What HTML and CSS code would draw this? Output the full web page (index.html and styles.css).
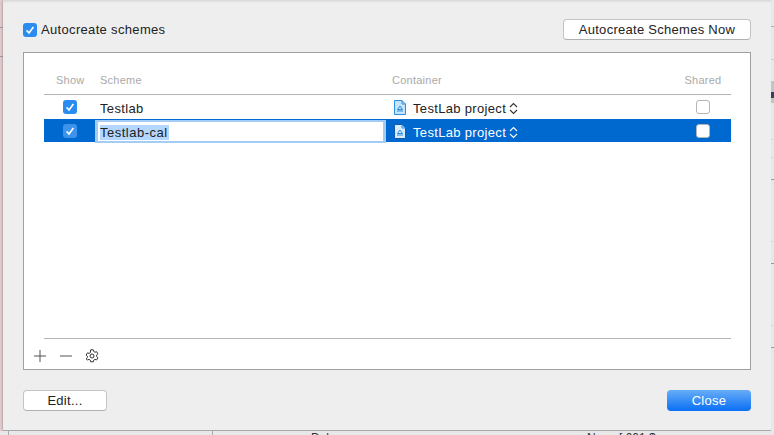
FILE: index.html
```html
<!DOCTYPE html>
<html lang="en">
<head>
    <meta charset="UTF-8">
    <title>Manage Schemes</title>
    <link rel="stylesheet" href="styles.css">
</head>
<body>
    <div class="desktop">
        <div class="side side-left"></div>
        <div class="sheet">
            <div class="top-row">
                <label class="auto-label">
                    <span class="check on"><svg viewBox="0 0 14 14"><path d="M3.6 7.4l2.4 2.6 4.4-6"/></svg></span>
                    Autocreate schemes
                </label>
                <button class="btn btn-wide">Autocreate Schemes Now</button>
            </div>
            <div class="panel">
                <div class="table">
                    <div class="row head">
                        <div class="col-show">Show</div>
                        <div class="col-scheme">Scheme</div>
                        <div class="col-container">Container</div>
                        <div class="col-shared">Shared</div>
                    </div>
                    <div class="row">
                        <div class="col-show"><span class="check on"><svg viewBox="0 0 14 14"><path d="M3.6 7.4l2.4 2.6 4.4-6"/></svg></span></div>
                        <div class="col-scheme">Testlab</div>
                        <div class="col-container">
                            <svg class="file-icon" viewBox="0 0 12 15"><path class="page" d="M.5.5h7.5l3.5 3.5v10.500h-11z"/><path class="fold" d="M8 .5v3.500h3.500"/><path class="mark" d="M3 11h6M3.500 9.500l2.500-3.500 2.500 3.500z"/></svg>
                            TestLab project
                            <svg class="updown" viewBox="0 0 9 13"><path d="M1 5l3.500-3.500 3.500 3.500M1 8l3.500 3.500 3.500-3.500"/></svg>
                        </div>
                        <div class="col-shared"><span class="check"></span></div>
                    </div>
                    <div class="row selected">
                        <div class="col-show"><span class="check on"><svg viewBox="0 0 14 14"><path d="M3.6 7.4l2.4 2.6 4.4-6"/></svg></span></div>
                        <div class="col-scheme"><div class="edit"><span class="edit-sel">Testlab-cal</span></div></div>
                        <div class="col-container">
                            <svg class="file-icon" viewBox="0 0 12 15"><path class="page" d="M.5.5h7.5l3.5 3.5v10.500h-11z"/><path class="fold" d="M8 .5v3.500h3.500"/><path class="mark" d="M3 11h6M3.500 9.500l2.500-3.500 2.500 3.500z"/></svg>
                            TestLab project
                            <svg class="updown" viewBox="0 0 9 13"><path d="M1 5l3.500-3.500 3.500 3.500M1 8l3.500 3.500 3.500-3.500"/></svg>
                        </div>
                        <div class="col-shared"><span class="check"></span></div>
                    </div>
                </div>
                <div class="tools">
                    <svg viewBox="0 0 12 12" class="tool"><path d="M6 0v12M0 6h12"/></svg>
                    <svg viewBox="0 0 12 12" class="tool"><path d="M0 6h12"/></svg>
                    <svg viewBox="0 0 14 14" class="tool gear"><path d="M5.700.8h2.600l.4 1.700 1.200.7 1.700-.5 1.300 2.200-1.300 1.200v1.400l1.300 1.200-1.300 2.200-1.700-.5-1.200.7-.4 1.700H5.700l-.4-1.700-1.200-.7-1.700.5L1.100 9.900l1.300-1.200V7.300L1.100 6.100l1.300-2.200 1.700.5 1.200-.7z"/><circle cx="7" cy="7" r="2"/></svg>
                </div>
            </div>
            <div class="bottom-row">
                <button class="btn btn-edit">Edit...</button>
                <button class="btn btn-close">Close</button>
            </div>
        </div>
        <div class="side side-right"><span class="peek"></span></div>
    </div>
    <div class="under">
        <span class="under-a">Dal</span>
        <span class="under-b">None [.001 $</span>
    </div>
</body>
</html>
```

FILE: styles.css
```css
* { box-sizing: border-box; }
html, body { margin: 0; padding: 0; }
body {
  width: 774px;
  height: 435px;
  overflow: hidden;
  background-color: #e8e8e8;
  font-family: "Liberation Sans", Arial, sans-serif;
  font-size: 13px;
  letter-spacing: .33px;
  color: #222;
}

.desktop { display: flex; height: 431px; }
.side { width: 3px; height: 100%; }
.side-left {
  background:
    linear-gradient(#a9a0a0, #a9a0a0) 0 27px / 3px 1px no-repeat,
    linear-gradient(#a9a0a0, #a9a0a0) 0 56px / 3px 1px no-repeat,
    #e6cfd2;
}
.side-right {
  position: relative;
  background: linear-gradient(#e8e8e8 26px, #aaa 26px, #aaa 27px, #e8e8e8 27px, #e8e8e8 59px, #ccc 59px, #ccc 60px, #e8e8e8 60px, #e8e8e8 81px, #c4c4c4 81px, #c4c4c4 103px, #e8e8e8 103px, #e8e8e8 139px, #d8d8d8 139px, #d8d8d8 140px, #e8e8e8 140px, #e8e8e8 157px, #d8d8d8 157px, #d8d8d8 158px, #e8e8e8 158px, #e8e8e8 179px, #999 179px, #999 180px, #e8e8e8 180px, #e8e8e8 241px, #d8d8d8 241px, #d8d8d8 242px, #e8e8e8 242px, #e8e8e8 263px, #999 263px, #999 264px, #e8e8e8 264px, #e8e8e8 325px, #d8d8d8 325px, #d8d8d8 326px, #e8e8e8 326px, #e8e8e8 347px, #999 347px, #999 348px, #e8e8e8 348px);
}
.peek { position: absolute; top: 92px; left: 0; width: 3px; height: 6px; background-color: #3a3f5c; }

.sheet {
  width: 768px;
  height: 431px;
  padding: 19px 20px 0;
  background-color: #eee;
  border-bottom: 1px solid #a8a8a8;
  box-shadow: 0 0 3px rgba(0, 0, 0, .4), inset 0 3px 3px -2px rgba(0, 0, 0, .12);
  position: relative;
}

.top-row { display: flex; justify-content: space-between; align-items: center; height: 21px; }
.auto-label { display: flex; align-items: center; gap: 4px; }

.check {
  display: inline-flex;
  width: 14px;
  height: 14px;
  border: 1px solid #b5b5b5;
  border-radius: 3px;
  background-color: #fff;
}
.check.on { border: none; background-color: #2b8cf0; }
.selected .check.on { background-color: #3d93ea; }
.check svg { width: 14px; height: 14px; fill: none; stroke: #fff; stroke-width: 1.6; }

.btn {
  font-family: inherit;
  font-size: 13px;
  letter-spacing: .28px;
  color: #222;
  height: 21px;
  padding: 0;
  background-color: #fff;
  border: 1px solid #c4c4c4;
  border-bottom-color: #b0b0b0;
  border-radius: 4px;
}
.btn-wide { width: 188px; }
.btn-edit { width: 84px; }
.btn-close {
  width: 84px;
  color: #fff;
  border: none;
  background: linear-gradient(#67adf7, #0a6ff5);
}

.panel {
  display: flex;
  flex-direction: column;
  width: 728px;
  height: 318px;
  margin-top: 12px;
  padding: 0 19px 0 20px;
  background-color: #fff;
  border: 1px solid #a0a0a0;
}
.table { flex: 1; border-bottom: 1px solid #b4b4b4; }

.row { display: flex; align-items: center; height: 24px; }
.row > div { flex-shrink: 0; }
.row.head {
  height: 42px;
  padding-top: 12px;
  font-size: 11px;
  letter-spacing: .25px;
  color: #a9a9a9;
  border-bottom: 1px solid #b4b4b4;
}
.row.selected { height: 23px; padding-top: 1px; background-color: #0069d0; color: #fff; }

.col-show { width: 52px; display: flex; justify-content: center; }
.head .col-show { justify-content: flex-start; padding-left: 12px; }
.col-scheme { width: 296px; padding: 2px 0 0 4px; }
.head .col-scheme { padding-top: 0; }
.selected .col-scheme { padding-top: 1px; }
.col-container { width: 297px; display: flex; align-items: center; padding: 2px 0 0 2px; }
.head .col-container { padding: 0; }
.col-shared { width: 42px; display: flex; justify-content: center; padding-right: 14px; }

.edit {
  margin: 0 6px 0 -5px;
  height: 23px;
  padding: 3px 0 0 2px;
  background-color: #fff;
  color: #222;
  border: 3px solid #a3cdf5;
  border-top-width: 2px;
  border-bottom-width: 2px;
  line-height: 15px;
  letter-spacing: .5px;
}
.edit-sel { display: inline-block; padding-right: 1px; background-color: #b3d7ff; }

.file-icon { width: 12px; height: 15px; margin: -1px 7px 0 0; fill: none; }
.file-icon .page { fill: #c8e4fb; stroke: #2a8fe0; }
.file-icon .fold { stroke: #2a8fe0; }
.file-icon .mark { stroke: #2a8fe0; }
.selected .file-icon .page { fill: #d8ecfc; stroke: #0d5cb0; }
.updown { width: 9px; height: 13px; margin-left: 3px; fill: none; stroke: #333; stroke-width: 1.1; }
.selected .updown { stroke: #fff; }

.tools { display: flex; align-items: center; gap: 14px; height: 30px; margin-left: -10px; padding-top: 3px; }
.tool { width: 12px; height: 12px; fill: none; stroke: #555; stroke-width: 1; }
.gear { width: 14px; height: 14px; margin-left: -1px; stroke: #333; }

.bottom-row { display: flex; justify-content: space-between; margin-top: 20px; width: 728px; }

.under {
  position: relative;
  height: 4px;
  overflow: hidden;
  background:
    linear-gradient(#aaa, #aaa) 8px 0 / 1px 4px no-repeat,
    linear-gradient(#aaa, #aaa) 212px 0 / 1px 4px no-repeat,
    #e8e8e8;
}
.under span { position: absolute; top: 0; font-size: 12px; line-height: 14px; letter-spacing: 0; color: #333; }
.under-a { left: 311px; }
.under-b { left: 587px; }
```
